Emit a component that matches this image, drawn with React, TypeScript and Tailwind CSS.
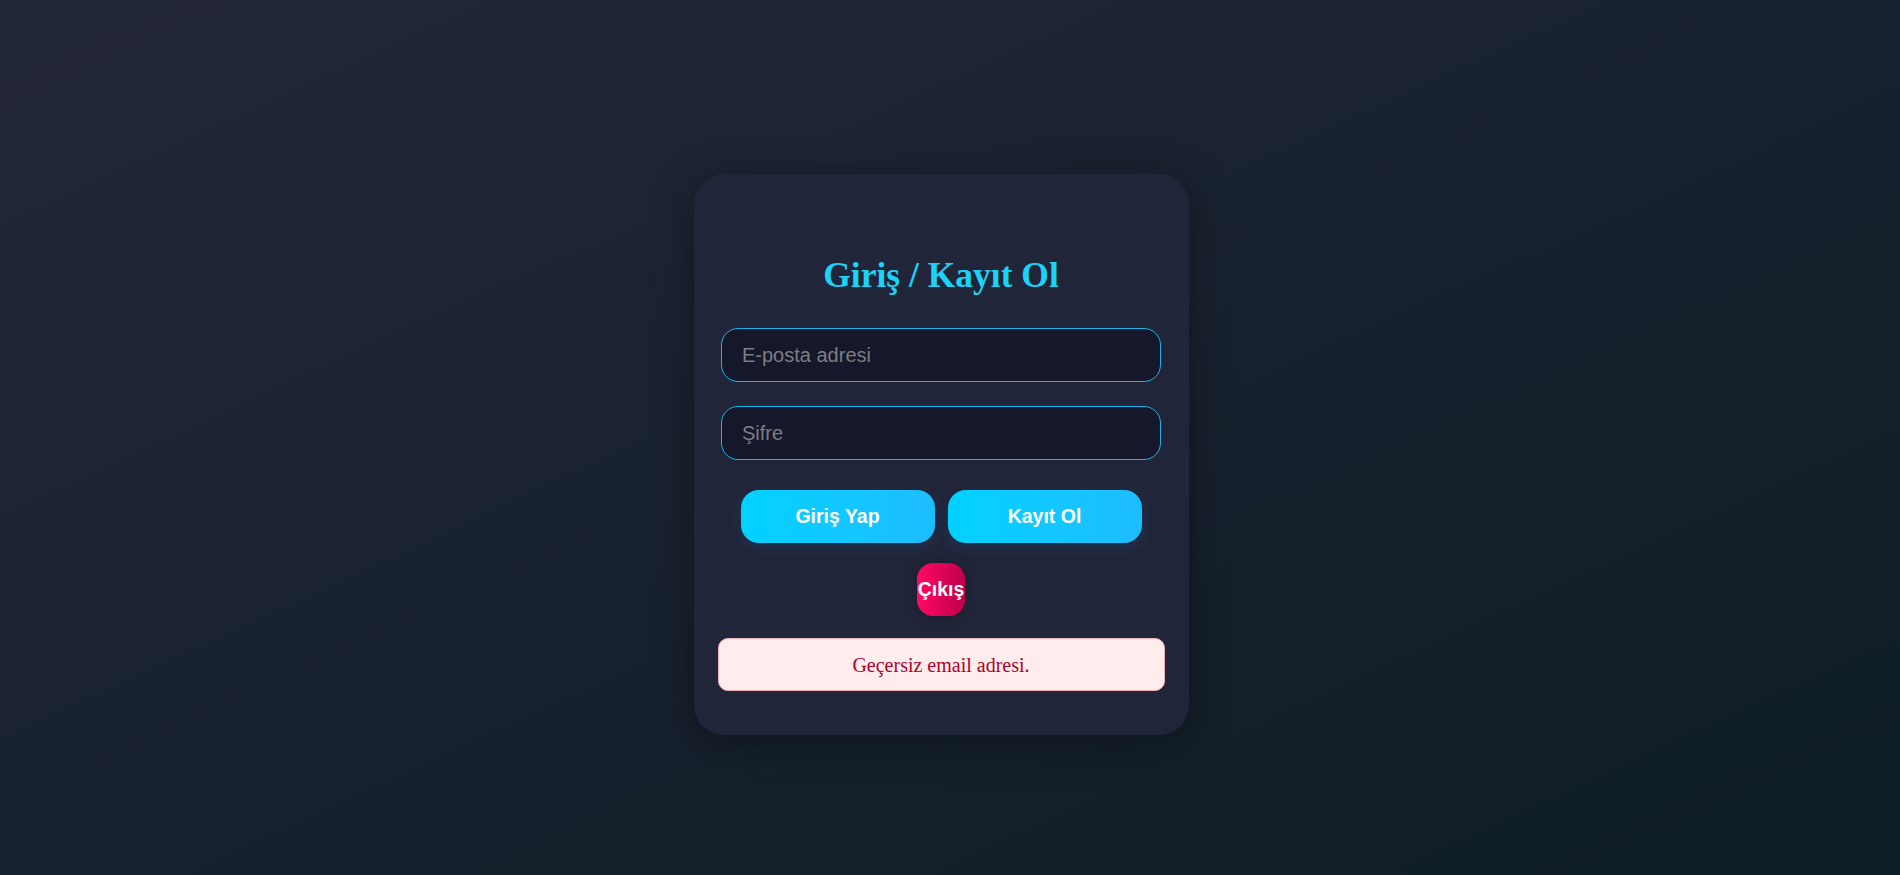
export default function App() {
  return (
    <main className="flex min-h-screen items-center justify-center bg-linear-to-br from-[#222639] to-[#0e1d24] pr-[18px] pt-[34px] font-['Liberation_Sans',Arial,sans-serif]">
      <section className="flex h-[561px] w-[495px] flex-col items-center rounded-[30px] bg-[#212539] pt-[82px] shadow-[0_8px_40px_rgba(0,0,0,0.35)]">
        <h2 className="mb-[34px] font-['Liberation_Serif','Times_New_Roman',serif] text-[35.5px] font-bold leading-[38px] text-[#1ad3f7]">
          Giriş / Kayıt Ol
        </h2>
        <div className="flex flex-col gap-y-[24px]">
          <input
            type="email"
            placeholder="E-posta adresi"
            className="h-[54px] w-[440px] rounded-[17px] border border-[#17b6ea] bg-[#15172a] px-[20px] text-[20px] text-white outline-none placeholder:text-[#7d7d84]"
          />
          <input
            type="password"
            placeholder="Şifre"
            className="h-[54px] w-[440px] rounded-[17px] border border-[#17b6ea] bg-[#15172a] px-[20px] text-[20px] text-white outline-none placeholder:text-[#7d7d84]"
          />
        </div>
        <div className="mt-[30px] flex gap-x-[13px]">
          <button
            type="button"
            className="h-[53px] w-[194px] rounded-[18px] bg-linear-to-r from-[#00d2ff] to-[#1dbdff] text-[19.5px] font-bold text-white shadow-[0_4px_14px_rgba(0,160,255,0.12)]"
          >
            Giriş Yap
          </button>
          <button
            type="button"
            className="h-[53px] w-[194px] rounded-[18px] bg-linear-to-r from-[#00d2ff] to-[#1dbdff] text-[19.5px] font-bold text-white shadow-[0_4px_14px_rgba(0,160,255,0.12)]"
          >
            Kayıt Ol
          </button>
        </div>
        <button
          type="button"
          className="mt-[20px] flex h-[53px] w-[48px] items-center justify-center overflow-visible whitespace-nowrap rounded-[16px] bg-linear-to-r from-[#ff0a62] to-[#bf004b] text-[19.5px] font-bold text-white shadow-[0_0_12px_rgba(0,0,0,0.25)]"
        >
          Çıkış
        </button>
        <div className="mt-[22px] flex h-[53px] w-[447px] items-center justify-center rounded-[10px] border border-[#f3b1b6] bg-[#ffecec] font-['Liberation_Serif','Times_New_Roman',serif] text-[20px] text-[#b0002a]">
          Geçersiz email adresi.
        </div>
      </section>
    </main>
  );
}
